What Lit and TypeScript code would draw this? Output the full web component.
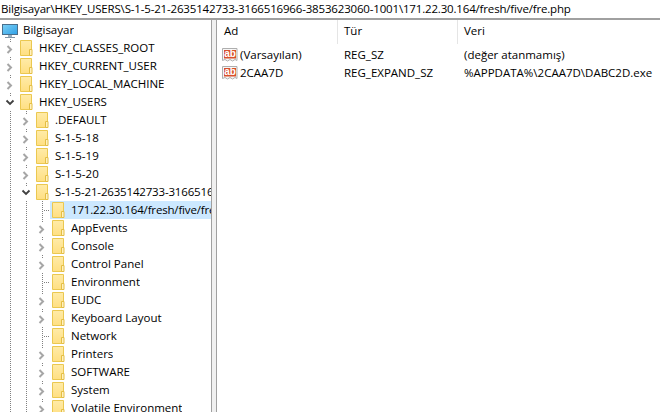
import { LitElement, html, css, svg } from "lit";
import { customElement } from "lit/decorators.js";

type Kind = "closed" | "open" | "leaf";
interface Node { label: string; guides: number; kind: Kind; selected?: boolean; tight?: boolean; }

const rows: Node[] = [
  { label: "HKEY_CLASSES_ROOT", guides: 0, kind: "closed" },
  { label: "HKEY_CURRENT_USER", guides: 0, kind: "closed" },
  { label: "HKEY_LOCAL_MACHINE", guides: 0, kind: "closed" },
  { label: "HKEY_USERS", guides: 0, kind: "open" },
  { label: ".DEFAULT", guides: 1, kind: "closed" },
  { label: "S-1-5-18", guides: 1, kind: "closed" },
  { label: "S-1-5-19", guides: 1, kind: "closed" },
  { label: "S-1-5-20", guides: 1, kind: "closed" },
  { label: "S-1-5-21-2635142733-3166516966-3853623060-1001", guides: 1, kind: "open", tight: true },
  { label: "171.22.30.164/fresh/five/fre.php", guides: 2, kind: "leaf", selected: true, tight: true },
  { label: "AppEvents", guides: 2, kind: "closed" },
  { label: "Console", guides: 2, kind: "closed" },
  { label: "Control Panel", guides: 2, kind: "closed" },
  { label: "Environment", guides: 2, kind: "leaf" },
  { label: "EUDC", guides: 2, kind: "closed" },
  { label: "Keyboard Layout", guides: 2, kind: "closed" },
  { label: "Network", guides: 2, kind: "leaf" },
  { label: "Printers", guides: 2, kind: "closed" },
  { label: "SOFTWARE", guides: 2, kind: "closed" },
  { label: "System", guides: 2, kind: "closed" },
  { label: "Volatile Environment", guides: 2, kind: "closed" },
];

const values = [
  { name: "(Varsayılan)", type: "REG_SZ", data: "(değer atanmamış)" },
  { name: "2CAA7D", type: "REG_EXPAND_SZ", data: "%APPDATA%\\2CAA7D\\DABC2D.exe" },
];

const folder = svg`<svg class="icon" width="16" height="18" viewBox="0 0 16 18">
  <defs><linearGradient id="fg" x1="0" y1="0" x2="0" y2="1"><stop offset="0" stop-color="#FFEBA8"/><stop offset="1" stop-color="#FFDF82"/></linearGradient></defs>
  <path d="M2.500 1.500h11v15h-11z" fill="url(#fg)" stroke="#EBC850"/>
  <path d="M11.500 16.500v-6h2.500v6z" fill="#FFF1C0" stroke="#E4BE44"/>
</svg>`;

const computer = svg`<svg class="icon" width="16" height="18" viewBox="0 0 16 18">
  <defs><linearGradient id="sc" x1="0" y1="0" x2="1" y2="1"><stop offset="0" stop-color="#7CD0F5"/><stop offset="1" stop-color="#2FA0E6"/></linearGradient></defs>
  <rect x="0.500" y="3.500" width="15" height="10" fill="url(#sc)" stroke="#4A6F8C"/>
  <rect x="6" y="14" width="4" height="2" fill="#9DB0BE"/>
  <rect x="3" y="16" width="10" height="1" fill="#8296A6"/>
</svg>`;

const regIcon = svg`<svg class="reg" width="16" height="16" viewBox="0 0 16 16">
  <path d="M0.500 1.500h14.500v12l-2-1-2.500 1.500-2.500-1.500-2.500 1.500-2.500-1.500-2.500 1z" fill="#F6F6F6" stroke="#AEAEAE"/>
  <rect x="2" y="3" width="12" height="8.500" fill="#D8502C"/>
  <text x="8" y="10.300" text-anchor="middle" class="ab">ab</text>
</svg>`;

const chevronRight = svg`<svg class="chev" width="16" height="18" viewBox="0 0 16 18"><path d="M5.500 7l3.500 3.500-3.500 3.500" fill="none" stroke="#A6A6A6" stroke-width="2"/></svg>`;
const chevronDown = svg`<svg class="chev" width="16" height="18" viewBox="0 0 16 18"><path d="M4.500 7.500l3.500 3.500 3.500-3.500" fill="none" stroke="#404040" stroke-width="1.800"/></svg>`;

@customElement("app-root")
export class AppRoot extends LitElement {
  static styles = css`
    :host {
      display: block;
      width: 660px;
      height: 412px;
      overflow: hidden;
      background: #fff;
      font-family: "Open Sans", "Noto Sans", sans-serif;
      font-size: 11.5px;
      color: #000;
    }
    .address {
      height: 18px;
      line-height: 18px;
      padding-left: 1px;
      white-space: nowrap;
      overflow: hidden;
      letter-spacing: -0.17px;
      border-bottom: 2px solid #a0a0a0;
    }
    .panes {
      display: flex;
      height: 392px;
    }
    .tree {
      width: 211px;
      flex: none;
      overflow: hidden;
      padding-top: 1px;
    }
    .splitter {
      width: 4px;
      flex: none;
      background: #f0f0f0;
      border-left: 1px solid #a0a0a0;
      border-right: 1px solid #a0a0a0;
    }
    .row {
      display: flex;
      height: 18px;
      line-height: 18px;
      padding-left: 2px;
      white-space: nowrap;
      overflow: hidden;
    }
    .cell {
      position: relative;
      flex: none;
      width: 16px;
      height: 18px;
    }
    .vline {
      position: absolute;
      left: 8px;
      top: 0;
      width: 1px;
      height: 18px;
      background: repeating-linear-gradient(to bottom, #808080 0 1px, transparent 1px 2px);
    }
    .hline {
      position: absolute;
      left: 9px;
      top: 9px;
      width: 7px;
      height: 1px;
      background: repeating-linear-gradient(to right, transparent 0 1px, #808080 1px 2px);
    }
    .chev {
      position: absolute;
      left: 0;
      top: 0;
      background: linear-gradient(#fff, #fff) 3px 4px / 11px 13px no-repeat;
    }
    .item {
      display: flex;
      flex: 1;
      min-width: 0;
    }
    .item.selected { background: #cce8ff; }
    .icon { flex: none; display: block; }
    .label {
      margin-left: 5px;
      overflow: hidden;
    }
    .label.tight { letter-spacing: -0.17px; }
    .list {
      flex: 1;
      min-width: 0;
      padding-left: 1px;
    }
    .head, .vrow {
      display: grid;
      grid-template-columns: 120px 120px 1fr;
    }
    .head {
      height: 24px;
      line-height: 22px;
    }
    .hcell {
      padding-left: 6px;
      border-right: 1px solid #e5e5e5;
      box-sizing: border-box;
    }
    .hcell:last-child { border-right: none; }
    .vrow {
      height: 18px;
      line-height: 18px;
      white-space: nowrap;
    }
    .vrows { padding-top: 2px; }
    .vname { display: flex; align-items: center; padding-left: 4px; }
    .vname span { margin-left: 2px; }
    .vcell { padding-left: 6px; }
    .reg { flex: none; display: block; }
    .ab {
      font-family: "Liberation Sans", sans-serif;
      font-size: 10px;
      font-weight: 700;
      fill: #fff;
    }
  `;

  private renderRow(n: Node) {
    const guides = Array.from({ length: n.guides }, () => html`<div class="cell"><div class="vline"></div></div>`);
    const tail =
      n.kind === "leaf"
        ? html`<div class="cell"><div class="vline"></div><div class="hline"></div></div>`
        : html`<div class="cell"><div class="vline"></div>${n.kind === "open" ? chevronDown : chevronRight}</div>`;
    return html`<div class="row">${guides}${tail}
      <div class="item ${n.selected ? "selected" : ""}">${folder}<span class="label ${n.tight ? "tight" : ""}">${n.label}</span></div>
    </div>`;
  }

  render() {
    return html`
      <div class="address">Bilgisayar\\HKEY_USERS\\S-1-5-21-2635142733-3166516966-3853623060-1001\\171.22.30.164/fresh/five/fre.php</div>
      <div class="panes">
        <div class="tree">
          <div class="row">${computer}<span class="label">Bilgisayar</span></div>
          ${rows.map((r) => this.renderRow(r))}
        </div>
        <div class="splitter"></div>
        <div class="list">
          <div class="head">
            <div class="hcell">Ad</div>
            <div class="hcell">Tür</div>
            <div class="hcell">Veri</div>
          </div>
          <div class="vrows">
            ${values.map((v) => html`<div class="vrow">
              <div class="vname">${regIcon}<span>${v.name}</span></div>
              <div class="vcell">${v.type}</div>
              <div class="vcell">${v.data}</div>
            </div>`)}
          </div>
        </div>
      </div>
    `;
  }
}
